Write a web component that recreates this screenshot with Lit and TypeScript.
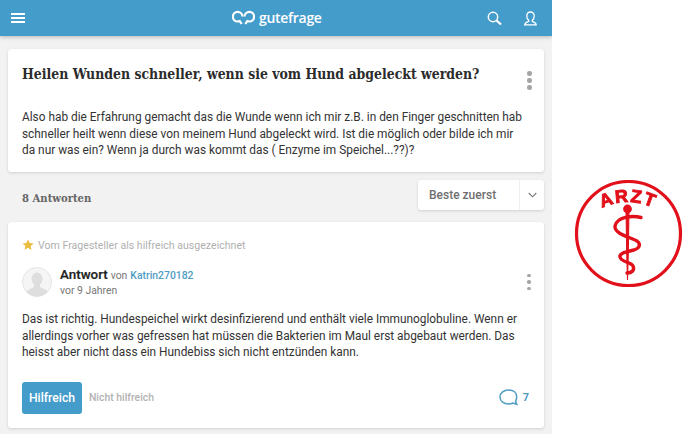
import { LitElement, html, css, svg } from "lit";
import { customElement } from "lit/decorators.js";

const dots = html`<span class="dots"><i></i><i></i><i></i></span>`;

@customElement("app-root")
export class AppRoot extends LitElement {
  static styles = css`
    :host { display: block; width: 700px; height: 434px; overflow: hidden; background: #fff; font-family: Roboto, "Liberation Sans", sans-serif; }
    * { box-sizing: border-box; }
    .page { display: flex; height: 434px; filter: blur(0.3px); }
    .main { width: 552px; height: 434px; background: #f2f2f2; flex: none; display: flex; flex-direction: column; overflow: hidden; }
    .aside { flex: 1; padding: 180px 0 0 22px; }
    .bar { height: 36px; flex: none; background: #449ccb; box-shadow: 0 1px 4px rgba(0,0,0,.25); display: flex; align-items: center; padding: 0 14px 0 11px; color: #fff; }
    .brand { margin-left: 207px; display: flex; align-items: center; gap: 4px; font: 600 14px "Open Sans", sans-serif; width: 247px; letter-spacing: -0.3px; position: relative; top: -1px; }
    .bar-icons { display: flex; gap: 21px; margin-left: auto; }
    .card { background: #fff; margin: 0 8px; border-radius: 3px; box-shadow: 0 1px 3px rgba(0,0,0,.14); }
    .q { margin-top: 13px; height: 123px; padding: 15px 14px; position: relative; }
    .q-head { display: flex; justify-content: space-between; align-items: flex-start; height: 45px; }
    h1 { margin: 0; font: 700 13.9px/20px "DejaVu Serif", serif; font-stretch: condensed; color: #2b2b2b; white-space: nowrap; }
    .dots { display: flex; flex-direction: column; gap: 3px; width: 4px; margin-right: -1px; }
    .dots i { width: 3.5px; height: 3.5px; border-radius: 50%; background: #a5a5a5; }
    .q .dots { margin: 7px -2px 0 0; width: 5px; gap: 2.5px; }
    .q .dots i { width: 4.5px; height: 4.5px; }
    .text { margin: 0; font-size: 11.87px; line-height: 16.6px; color: #333; white-space: nowrap; }
    .sort-row { display: flex; align-items: center; justify-content: space-between; height: 30px; margin: 8px 8px 12px 22px; }
    .count { font: 700 11.2px "DejaVu Serif", serif; font-stretch: condensed; color: #666; padding-top: 5px; }
    .select { width: 126px; height: 30px; background: #fff; border-radius: 3px; box-shadow: 0 1px 3px rgba(0,0,0,.14); display: flex; align-items: center; font-size: 12px; font-weight: 500; color: #6f6f6f; }
    .select span { flex: 1; padding-left: 11px; border-right: 1px solid #eee; line-height: 30px; }
    .select svg { margin: 0 7px 0 8px; }
    .a { height: 206px; padding: 16px 14px 0; }
    .award { display: flex; align-items: center; gap: 4px; height: 14px; font-size: 10.6px; color: #b0b0b0; }
    .who { display: flex; height: 30px; margin-top: 15px; align-items: center; gap: 8px; }
    .avatar { width: 30px; height: 30px; flex: none; }
    .names { flex: 1; }
    .l1 { display: flex; align-items: baseline; gap: 3px; font-size: 10.4px; color: #777; line-height: 16px; }
    .l1 b { font-size: 13.4px; font-weight: 500; color: #222; -webkit-text-stroke: 0.2px #222; }
    .l1 a { color: #4f9dc4; font-weight: 500; }
    .l2 { font-size: 10.4px; color: #777; line-height: 13px; }
    .a .text { margin-top: 14px; }
    .actions { display: flex; align-items: center; margin-top: 21px; gap: 7px; }
    .btn { width: 60px; height: 32px; background: #449ccb; border-radius: 3px; color: #fff; font-size: 12.2px; font-weight: 500; display: flex; align-items: center; justify-content: center; }
    .no { font-size: 10.4px; font-weight: 500; color: #b2b2b2; flex: 1; }
    .cm { display: flex; align-items: center; gap: 5px; font-size: 11px; font-weight: 700; color: #4f9dc4; margin-right: 1px; }
  `;

  render() {
    return html`<div class="page">
      <div class="main">
        <header class="bar">
          <svg width="14" height="12" viewBox="0 0 14 12"><path d="M0 2h14M0 6h14M0 10h14" stroke="#fff" stroke-width="1.8"/></svg>
          <div class="brand">
            <svg width="23" height="17" viewBox="0 0 23 17" fill="none" stroke="#fff" stroke-width="2.200"><path d="M10.500 7.500a4.800 4.800 0 1 0-4.800 5c.7 0 1.400-.1 2-.4l2 2.900"/><path d="M12.500 7.500a4.800 4.800 0 1 1 4.800 5c-.7 0-1.400-.1-2-.4l-2 2.900"/></svg>
            gutefrage
          </div>
          <div class="bar-icons">
            <svg width="15" height="15" viewBox="0 0 15 15" fill="none" stroke="#fff"><circle cx="6" cy="6" r="4.700" stroke-width="1.500"/><path d="M9.500 9.500l4.500 4" stroke-width="2.200"/></svg>
            <svg width="15" height="15" viewBox="0 0 15 15" fill="none" stroke="#fff" stroke-width="1.300"><path d="M5.700 9.300C4.300 8.300 3.800 6.700 3.800 5c0-2.500 1.500-4 3.700-4s3.700 1.500 3.700 4c0 1.700-.5 3.300-1.900 4.300v1c2 .6 3.700 1.300 3.900 3.600H1.700c.2-2.300 1.900-3 4-3.600z"/></svg>
          </div>
        </header>

        <section class="card q">
          <div class="q-head">
            <h1>Heilen Wunden schneller, wenn sie vom Hund abgeleckt werden?</h1>
            ${dots}
          </div>
          <p class="text">Also hab die Erfahrung gemacht das die Wunde wenn ich mir z.B. in den Finger geschnitten hab<br>schneller heilt wenn diese von meinem Hund abgeleckt wird. Ist die möglich oder bilde ich mir<br>da nur was ein? Wenn ja durch was kommt das ( Enzyme im Speichel...??)?</p>
        </section>

        <div class="sort-row">
          <div class="count">8 Antworten</div>
          <div class="select"><span>Beste zuerst</span>
            <svg width="9" height="6" viewBox="0 0 9 6" fill="none" stroke="#777" stroke-width="1.100"><path d="M.7 1l3.800 3.800L8.300 1"/></svg>
          </div>
        </div>

        <section class="card a">
          <div class="award">
            <svg width="12" height="12" viewBox="0 0 12 12"><path d="M6 .5l1.700 3.600 3.900.5-2.900 2.700.8 3.900L6 8.800l-3.500 1.900.8-3.900L.4 4.600l3.900-.5z" fill="#e9bd42"/></svg>
            Vom Fragesteller als hilfreich ausgezeichnet
          </div>
          <div class="who">
            <svg class="avatar" viewBox="0 0 30 30"><defs><clipPath id="c"><circle cx="15" cy="15" r="14.500"/></clipPath></defs><circle cx="15" cy="15" r="14.500" fill="#f5f5f5" stroke="#e4e4e4"/><g clip-path="url(#c)" fill="#dedede"><ellipse cx="15" cy="12" rx="5.500" ry="6.500"/><path d="M12 17h6v3l7 3.500V30H5v-6.500l7-3.500z"/></g></svg>
            <div class="names">
              <div class="l1"><b>Antwort</b> <span>von</span> <a>Katrin270182</a></div>
              <div class="l2">vor 9 Jahren</div>
            </div>
            ${dots}
          </div>
          <p class="text">Das ist richtig. Hundespeichel wirkt desinfizierend und enthält viele Immunoglobuline. Wenn er<br>allerdings vorher was gefressen hat müssen die Bakterien im Maul erst abgebaut werden. Das<br>heisst aber nicht dass ein Hundebiss sich nicht entzünden kann.</p>
          <div class="actions">
            <div class="btn">Hilfreich</div>
            <div class="no">Nicht hilfreich</div>
            <div class="cm">
              <svg width="19" height="17" viewBox="0 0 19 17" fill="none" stroke="#4f9dc4" stroke-width="1.500"><path d="M9.500 1C5 1 1 3.700 1 8s4 7 8.500 7c2 0 3.500-.4 4.500-1l3.800 1.300-1.300-3c.8-1.200 1.200-2.700 1.200-4.300 0-4.300-3.200-7-7.700-7z"/></svg>
              7
            </div>
          </div>
        </section>
      </div>

      <div class="aside">
        <svg width="110" height="110" viewBox="0 0 110 110" fill="none">
          ${svg`
          <defs><path id="arc" d="M10 41.700A59 59 0 0 1 98 41.700"/></defs>
          <circle cx="54.500" cy="53.500" r="52" stroke="#e2101a" stroke-width="3.200"/>
          <text font-family="Liberation Sans, sans-serif" font-weight="700" font-size="18" fill="#e2101a" stroke="#e2101a" stroke-width=".9" letter-spacing="1.500" text-anchor="middle"><textPath href="#arc" startOffset="50%">ARZT</textPath></text>
          <path d="M52 31L52.700 74 53.500 100 54.300 74 55 31z" fill="#e2101a" stroke="#e2101a" stroke-width="1"/>
          <circle cx="53.500" cy="29" r="4.400" fill="#e2101a"/>
          <path d="M67 37.500C58 35 43 37 41 46 40 54 56 57 63 61 67 64 66 68 60 70 52 72 45 73 46 77 47 82 57 82 59 86 61 90 58 93 53 93" stroke="#e2101a" stroke-width="3.400" stroke-linecap="round"/>
          `}
        </svg>
      </div>
    </div>`;
  }
}
